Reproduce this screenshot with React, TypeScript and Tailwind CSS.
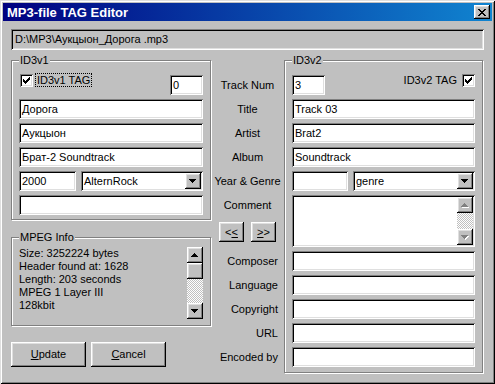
import React from "react";

const FACE = "bg-[#c0c0c0]";
const sunken =
  "shadow-[inset_1px_1px_0_#808080,inset_-1px_-1px_0_#ffffff,inset_2px_2px_0_#000000,inset_-2px_-2px_0_#dfdfdf]";
const raised =
  "shadow-[inset_-1px_-1px_0_#000000,inset_1px_1px_0_#ffffff,inset_-2px_-2px_0_#808080,inset_2px_2px_0_#dfdfdf]";
const etched = "border border-[#808080] shadow-[inset_1px_1px_0_#ffffff,1px_1px_0_#ffffff]";
const dither =
  "bg-[repeating-conic-gradient(#ffffff_0_25%,#c0c0c0_0_50%)] bg-[length:2px_2px]";

function Arrow({ dir, disabled }: { dir: "up" | "down"; disabled?: boolean }) {
  const rows = dir === "down" ? [0, 1, 2, 3] : [3, 2, 1, 0];
  const col = disabled ? "#808080" : "#000000";
  return (
    <svg width="8" height="5" shapeRendering="crispEdges" className="block">
      {disabled &&
        rows.map((r, i) => (
          <rect key={"s" + i} x={r + 1} y={i + 1} width={7 - 2 * r} height={1} fill="#ffffff" />
        ))}
      {rows.map((r, i) => (
        <rect key={i} x={r} y={i} width={7 - 2 * r} height={1} fill={col} />
      ))}
    </svg>
  );
}

function SmallBtn({ dir, disabled, h = "h-[16px]" }: { dir: "up" | "down"; disabled?: boolean; h?: string }) {
  return (
    <div className={`w-[16px] ${h} ${FACE} ${raised} flex items-center justify-center shrink-0`}>
      <Arrow dir={dir} disabled={disabled} />
    </div>
  );
}

function Edit({ value = "", className = "" }: { value?: string; className?: string }) {
  return (
    <div className={`h-[20px] bg-white ${sunken} flex items-center pl-[3px] whitespace-nowrap overflow-hidden ${className}`}>
      {value}
    </div>
  );
}

function Combo({ value, className = "" }: { value: string; className?: string }) {
  return (
    <div className={`h-[20px] bg-white ${sunken} flex items-center pl-[3px] pr-[2px] ${className}`}>
      <span className="flex-1 whitespace-nowrap">{value}</span>
      <SmallBtn dir="down" />
    </div>
  );
}

function Check() {
  const px = [
    [6, 0], [5, 1], [6, 1], [0, 2], [4, 2], [5, 2], [6, 2],
    [0, 3], [1, 3], [3, 3], [4, 3], [5, 3],
    [0, 4], [1, 4], [2, 4], [3, 4], [4, 4],
    [1, 5], [2, 5], [3, 5], [2, 6],
  ];
  return (
    <div className={`w-[13px] h-[13px] bg-white ${sunken} flex items-center justify-center shrink-0`}>
      <svg width="7" height="7" shapeRendering="crispEdges" className="block">
        {px.map(([x, y], i) => (
          <rect key={i} x={x} y={y} width={1} height={1} fill="#000" />
        ))}
      </svg>
    </div>
  );
}

function Group({ label, className = "", children }: { label: string; className?: string; children: React.ReactNode }) {
  return (
    <div className={`relative ${etched} ${className}`}>
      <span className={`absolute left-[7px] top-[-8px] ${FACE} px-[1px] leading-[14px]`}>{label}</span>
      {children}
    </div>
  );
}

function Button({ children, className = "" }: { children: React.ReactNode; className?: string }) {
  return (
    <div className={`${FACE} ${raised} flex items-center justify-center ${className}`}>{children}</div>
  );
}

export default function App() {
  return (
    <div
      className={`w-[495px] h-[384px] ${FACE} p-[3px] text-[11px] text-black font-['Liberation_Sans',Arial,sans-serif] shadow-[inset_1px_1px_0_#dfdfdf,inset_-1px_-1px_0_#000000,inset_2px_2px_0_#ffffff,inset_-2px_-2px_0_#808080] leading-none`}
    >
      {/* Title bar */}
      <div className="h-[18px] bg-[linear-gradient(to_right,#000080,#1084d0)] flex items-center justify-between pl-[4px] pr-[2px]">
        <span className="text-white font-bold text-[13px]">MP3-file TAG Editor</span>
        <div className={`w-[16px] h-[14px] ${FACE} ${raised} flex items-center justify-center`}>
          <svg width="8" height="7" shapeRendering="crispEdges" className="block">
            {[0, 1, 2, 3, 4, 5, 6].map((i) => (
              <g key={i}>
                <rect x={i} y={i} width={2} height={1} fill="#000" />
                <rect x={6 - i} y={i} width={2} height={1} fill="#000" />
              </g>
            ))}
          </svg>
        </div>
      </div>

      <div className="pl-[8px] pt-[8px]">
        {/* path */}
        <div className={`w-[473px] h-[21px] ${sunken} flex items-center pl-[4px]`}>
          D:\MP3\Аукцыон_Дорога .mp3
        </div>

        <div className="flex mt-[10px]">
          {/* left column */}
          <div className="w-[200px] flex flex-col">
            <Group label="ID3v1" className="h-[160px] px-[7px] pt-[14px]">
              <div className="flex justify-between">
                <div className="flex items-start -mt-[1px]">
                  <div className="ml-[1px]">
                    <Check />
                  </div>
                  <span className="ml-[2px] -mt-[1px] border border-dotted border-black px-[1px] h-[14px] flex items-center">
                    ID3v1 TAG
                  </span>
                </div>
                <Edit value="0" className="w-[33px]" />
              </div>
              <Edit value="Дорога" className="mt-[4px]" />
              <Edit value="Аукцыон" className="mt-[4px]" />
              <Edit value="Брат-2 Soundtrack" className="mt-[4px]" />
              <div className="flex gap-[5px] mt-[4px]">
                <Edit value="2000" className="w-[57px]" />
                <Combo value="AlternRock" className="flex-1" />
              </div>
              <Edit className="mt-[4px]" />
            </Group>

            <Group label="MPEG Info" className="h-[89px] mt-[17px] pl-[7px] pr-[7px] pt-[9px]">
              <div className="flex">
                <div className="flex-1 leading-[13px]">
                  <div>Size: 3252224 bytes</div>
                  <div>Header found at: 1628</div>
                  <div>Length: 203 seconds</div>
                  <div>MPEG 1 Layer III</div>
                  <div>128kbit</div>
                </div>
                <div className="w-[16px] h-[72px] flex flex-col">
                  <SmallBtn dir="up" />
                  <div className={`w-[16px] h-[16px] ${FACE} ${raised}`} />
                  <div className={`flex-1 ${dither}`} />
                  <SmallBtn dir="down" />
                </div>
              </div>
            </Group>

            <div className="flex gap-[5px] mt-[16px]">
              <Button className="w-[75px] h-[25px]">
                <span>
                  <u>U</u>pdate
                </span>
              </Button>
              <Button className="w-[75px] h-[25px]">
                <span>
                  <u>C</u>ancel
                </span>
              </Button>
            </div>
          </div>

          {/* middle labels */}
          <div className="w-[73px] flex flex-col pt-[15px]">
            {["Track Num", "Title", "Artist", "Album", "Year & Genre", "Comment"].map((l, i) => (
              <div key={l} className={`h-[20px] flex items-center justify-center whitespace-nowrap ${i ? "mt-[4px]" : ""}`}>
                {l}
              </div>
            ))}
            <div className="flex gap-[7px] pl-[8px] mt-[7px]">
              <Button className="w-[25px] h-[20px]">
                <span>
                  &lt;<u>&lt;</u>
                </span>
              </Button>
              <Button className="w-[25px] h-[20px]">
                <span>
                  <u>&gt;</u>&gt;
                </span>
              </Button>
            </div>
            <div className="mt-[9px] flex flex-col">
              {["Composer", "Language", "Copyright", "URL", "Encoded by"].map((l, i) => (
                <div key={l} className={`h-[20px] flex items-center justify-end pr-[6px] whitespace-nowrap ${i ? "mt-[4px]" : ""}`}>
                  {l}
                </div>
              ))}
            </div>
          </div>

          {/* right group */}
          <Group label="ID3v2" className="w-[199px] h-[313px] px-[7px] pt-[14px]">
            <div className="flex justify-between">
              <Edit value="3" className="w-[33px]" />
              <div className="flex items-start -mt-[1px]">
                <span className="mr-[5px] mt-[1px]">ID3v2 TAG</span>
                <Check />
              </div>
            </div>
            <Edit value="Track 03" className="mt-[4px]" />
            <Edit value="Brat2" className="mt-[4px]" />
            <Edit value="Soundtrack" className="mt-[4px]" />
            <div className="flex gap-[5px] mt-[4px]">
              <Edit className="w-[56px]" />
              <Combo value="genre" className="flex-1" />
            </div>
            <div className={`h-[52px] mt-[4px] bg-white ${sunken} flex justify-end p-[2px]`}>
              <div className="w-[16px] flex flex-col">
                <SmallBtn dir="up" disabled />
                <div className={`flex-1 ${dither}`} />
                <SmallBtn dir="down" disabled />
              </div>
            </div>
            <Edit className="mt-[4px]" />
            <Edit className="mt-[4px]" />
            <Edit className="mt-[4px]" />
            <Edit className="mt-[4px]" />
            <Edit className="mt-[4px]" />
          </Group>
        </div>
      </div>
    </div>
  );
}
